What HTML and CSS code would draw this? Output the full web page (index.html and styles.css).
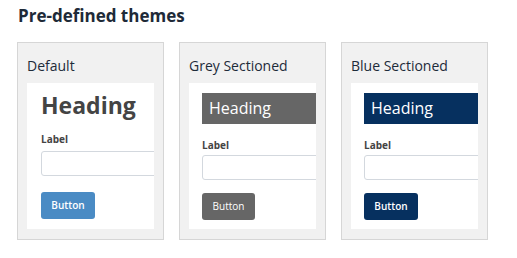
FILE: index.html
```html
<!DOCTYPE html>
<html lang="en">
<head>
    <meta charset="UTF-8">
    <meta name="viewport" content="width=device-width, initial-scale=1.0">
    <title>Pre-defined themes</title>
    <link rel="stylesheet" href="styles.css">
</head>
<body>
    <h2 class="title">Pre-defined themes</h2>

    <div class="themes">
        <div class="theme">
            <div class="theme-name">Default</div>
            <div class="preview preview-default">
                <div class="preview-heading">Heading</div>
                <div class="preview-label">Label</div>
                <div class="preview-input"></div>
                <div class="preview-button">Button</div>
            </div>
        </div>

        <div class="theme">
            <div class="theme-name">Grey Sectioned</div>
            <div class="preview preview-grey">
                <div class="preview-heading">Heading</div>
                <div class="preview-label">Label</div>
                <div class="preview-input"></div>
                <div class="preview-button">Button</div>
            </div>
        </div>

        <div class="theme">
            <div class="theme-name">Blue Sectioned</div>
            <div class="preview preview-blue">
                <div class="preview-heading">Heading</div>
                <div class="preview-label">Label</div>
                <div class="preview-input"></div>
                <div class="preview-button">Button</div>
            </div>
        </div>
    </div>
</body>
</html>
```

FILE: styles.css
```css
* {
    box-sizing: border-box;
}

body {
    font-family: "Open Sans", "Liberation Sans", sans-serif;
    background-color: #fff;
    margin: 0;
    padding: 0 17px;
}

.title {
    font-size: 17px;
    line-height: 20px;
    font-weight: bold;
    color: #1e2a38;
    margin: 6px 0 16px 1px;
}

.themes {
    display: flex;
    gap: 15px;
}

.theme {
    width: 147px;
    height: 198px;
    padding: 14px 9px 10px 9px;
    background-color: #f1f1f1;
    border: 1px solid #d6d6d6;
}

.theme-name {
    font-size: 14px;
    line-height: 18px;
    color: #1d2b3a;
    margin-bottom: 8px;
}

.preview {
    height: 146px;
    background-color: #fff;
    padding-left: 14px;
    overflow: hidden;
}

.preview-heading {
    white-space: nowrap;
}

.preview-label {
    font-size: 10px;
    line-height: 14px;
    font-weight: bold;
    color: #444;
    margin-bottom: 5px;
}

.preview-input {
    width: 140px;
    height: 25px;
    border: 1px solid #d3d8de;
    border-radius: 3px;
    margin-bottom: 16px;
}

.preview-button {
    width: 54px;
    height: 27px;
    line-height: 27px;
    border-radius: 3px;
    text-align: center;
    font-size: 10px;
    font-weight: 600;
    color: #fff;
}

/* default */
.preview-default {
    padding-top: 9px;
}

.preview-default .preview-heading {
    font-size: 23px;
    line-height: 26px;
    font-weight: bold;
    color: #444;
    margin-bottom: 14px;
}

.preview-default .preview-button {
    background-color: #4a8bc4;
}

/* sectioned */
.preview-grey,
.preview-blue {
    padding-top: 10px;
    padding-left: 13px;
}

.preview-grey .preview-heading,
.preview-blue .preview-heading {
    height: 31px;
    line-height: 30px;
    font-size: 16px;
    color: #fff;
    padding-left: 7px;
    margin-bottom: 14px;
}

.preview-grey .preview-input,
.preview-blue .preview-input {
    margin-bottom: 13px;
}

.preview-grey .preview-label,
.preview-blue .preview-label {
    margin-bottom: 3px;
}

.preview-grey .preview-heading,
.preview-grey .preview-button {
    background-color: #666;
}

.preview-grey .preview-button {
    width: 53px;
    font-weight: normal;
}

.preview-blue .preview-heading,
.preview-blue .preview-button {
    background-color: #06305f;
}
```
